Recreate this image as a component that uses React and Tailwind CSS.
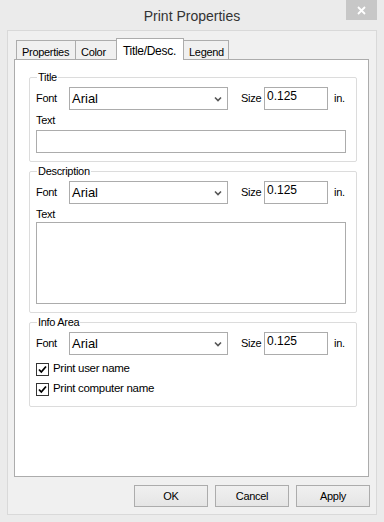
import React from 'react';

const tabs = [
  { id: 'properties', label: 'Properties', w: 'w-[60px]' },
  { id: 'color', label: 'Color', w: 'w-[42px]' },
  { id: 'title', label: 'Title/Desc.', w: 'w-[68px]' },
  { id: 'legend', label: 'Legend', w: 'w-[46px]' },
];

const FontRow = () => (
  <div className="flex items-center h-[23px]">
    <span className="w-[33px]">Font</span>
    <div className="w-[159px] h-[23px] flex items-center justify-between border border-[#acacac] bg-white pl-[2px] pr-[5px]">
      <span className="text-[13px] tracking-normal text-black">Arial</span>
      <svg width="8" height="6" viewBox="0 0 8 6">
        <path d="M1 1.5 L4 4.5 L7 1.5" fill="none" stroke="#555" strokeWidth="1.6" />
      </svg>
    </div>
    <span className="ml-[13px] w-[23px]">Size</span>
    <div className="w-[64px] h-[23px] border border-[#acacac] bg-white pl-[2px] text-[12px] leading-[16px] tracking-normal">0.125</div>
    <span className="ml-[6px]">in.</span>
  </div>
);

const Check = ({ label }) => (
  <div className="flex items-center h-[20px]">
    <div className="w-[13px] h-[13px] border border-[#333] bg-white flex items-center justify-center">
      <svg width="11" height="11" viewBox="0 0 11 11">
        <path d="M2 5.5 L4.3 8 L9 2.5" fill="none" stroke="#000" strokeWidth="1.8" />
      </svg>
    </div>
    <span className="ml-[4px] text-[11.5px]">{label}</span>
  </div>
);

const Group = ({ title, children, className = '' }) => (
  <fieldset className={`w-[328px] border border-[#dcdcdc] rounded-[2px] px-[6px] ${className}`}>
    <legend className="ml-px px-px leading-[14px]">{title}</legend>
    {children}
  </fieldset>
);

const Btn = ({ children }) => (
  <button className="w-[74px] h-[22px] border border-[#acacac] bg-gradient-to-b from-[#f0f0f0] to-[#e5e5e5] text-[11px] text-black">
    {children}
  </button>
);

export default function App() {
  return (
    <div className="w-[384px] h-[522px] bg-[#ebebeb] flex flex-col font-['Liberation_Sans',Arial,sans-serif] text-[11px] tracking-[-0.3px] text-black">
      {/* Title bar */}
      <div className="h-[30px] flex items-start">
        <div className="w-[38px]" />
        <div className="flex-1 text-center text-[14px] tracking-normal text-[#333] pt-[6px]">Print Properties</div>
        <div className="w-[31px] h-[20px] bg-[#c7c7c7] mr-[7px] flex items-center justify-center">
          <svg width="9" height="9" viewBox="0 0 9 9">
            <path d="M1 1 L8 8 M8 1 L1 8" stroke="#fff" strokeWidth="1.8" />
          </svg>
        </div>
      </div>

      {/* Client area */}
      <div className="mx-[7px] h-[485px] border border-[#d9d9d9] bg-[#f0f0f0] pl-[6px] pt-[7px]">
        <div className="flex items-end pl-[2px]">
          {tabs.map((t, i) =>
            t.id === 'title' ? (
              <div
                key={t.id}
                className={`relative ${t.w} h-[22px] -mb-px -ml-px border border-b-0 border-[#acacac] bg-white pl-[6px] pt-[3px] text-[12px]`}
              >
                {t.label}
              </div>
            ) : (
              <div
                key={t.id}
                className={`${t.w} h-[19px] ${i > 0 ? '-ml-px' : ''} border border-b-0 border-[#acacac] bg-[#f0f0f0] pl-[5px] pt-[3px]`}
              >
                {t.label}
              </div>
            )
          )}
        </div>

        {/* Tab panel */}
        <div className="w-[355px] h-[418px] border border-[#acacac] bg-white pl-[14px] pt-[10px]">
          <Group title="Title" className="pb-[8px]">
            <div className="mt-[3px]">
              <FontRow />
            </div>
            <div className="mt-[3px] leading-[14px]">Text</div>
            <div className="mt-[3px] w-[310px] h-[23px] border border-[#acacac] bg-white" />
          </Group>

          <Group title="Description" className="mt-[2px] pb-[8px]">
            <div className="mt-[3px]">
              <FontRow />
            </div>
            <div className="mt-[3px] leading-[14px]">Text</div>
            <div className="mt-[1px] w-[310px] h-[82px] border border-[#acacac] bg-white" />
          </Group>

          <Group title="Info Area" className="mt-[2px] pb-[7px]">
            <div className="mt-[3px] mb-[4px]">
              <FontRow />
            </div>
            <Check label="Print user name" />
            <Check label="Print computer name" />
          </Group>
        </div>

        {/* Buttons */}
        <div className="mt-[8px] flex justify-end gap-[7px] pr-[6px]">
          <Btn>OK</Btn>
          <Btn>Cancel</Btn>
          <Btn>Apply</Btn>
        </div>
      </div>
    </div>
  );
}
